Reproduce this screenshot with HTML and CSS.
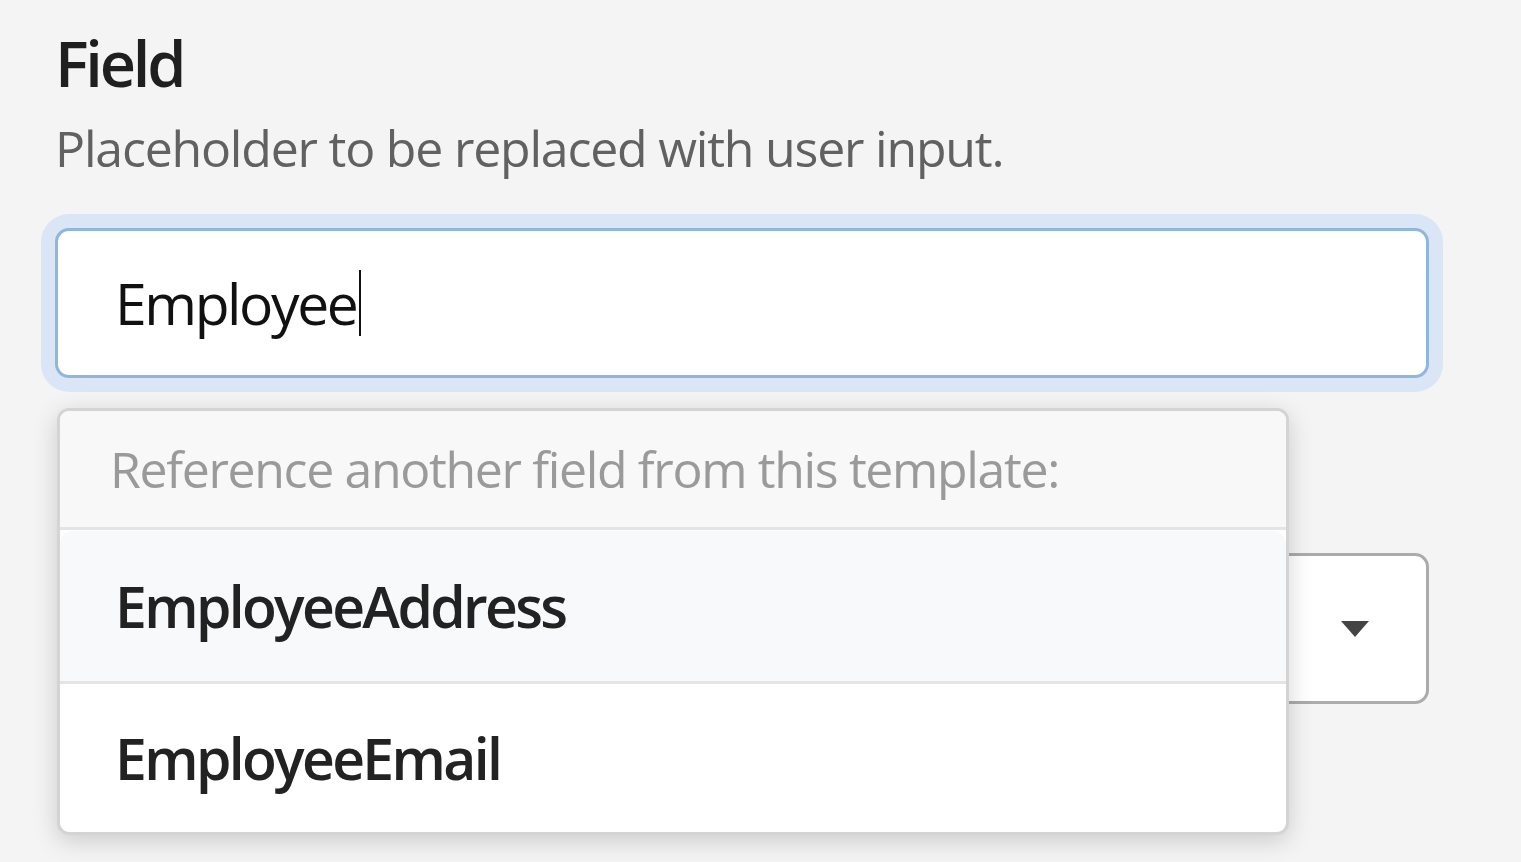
FILE: index.html
```html
<!DOCTYPE html>
<html lang="en">
  <head>
    <meta charset="UTF-8" />
    <meta name="viewport" content="width=device-width, initial-scale=1.0" />
    <title>Field</title>
    <link rel="stylesheet" href="styles.css">
  </head>
  <body>
    <div class="panel">
      <h2 class="label">Field</h2>
      <p class="hint">Placeholder to be replaced with user input.</p>
      <div class="input">
        <span class="value">Employee</span><span class="caret"></span>
      </div>
      <div class="select">
        <span class="chevron"></span>
      </div>

      <div class="menu">
        <div class="menu-head">Reference another field from this template:</div>
        <div class="menu-item active">EmployeeAddress</div>
        <div class="menu-item">EmployeeEmail</div>
      </div>
    </div>
  </body>
</html>
```

FILE: styles.css
```css
* {
  margin: 0;
  padding: 0;
  box-sizing: border-box;
}
body {
  width: 100vw;
  height: 100vh;
  overflow: hidden;
  background: #f4f4f4;
  font-family: "Open Sans", "Noto Sans", sans-serif;
}
.panel {
  position: relative;
  padding: 24px 92px 0 55px;
}
.label {
  font-size: 63px;
  line-height: 77px;
  font-weight: 600;
  letter-spacing: -3.2px;
  color: #1f1f1f;
}
.hint {
  margin-top: 12px;
  font-size: 50px;
  line-height: 70px;
  letter-spacing: -1.2px;
  color: #616161;
}
.input {
  display: flex;
  align-items: center;
  margin-top: 45px;
  height: 150px;
  padding-left: 57px;
  background: #fff;
  border: 3px solid #8fb6dc;
  border-radius: 14px;
  box-shadow: 0 0 0 14px #dae5f5;
  font-size: 57px;
  letter-spacing: -2.4px;
  color: #111;
}
.caret {
  width: 2px;
  height: 66px;
  margin-left: 3px;
  background: #111;
}
.select {
  display: flex;
  justify-content: flex-end;
  align-items: center;
  margin: 175px 0 0 30px;
  height: 151px;
  padding-right: 57px;
  background: #fff;
  border: 3px solid #ababab;
  border-radius: 14px;
}
.chevron {
  width: 0;
  height: 0;
  border-left: 14px solid transparent;
  border-right: 14px solid transparent;
  border-top: 16px solid #444;
}
.menu {
  position: absolute;
  top: 408px;
  left: 57px;
  width: 1232px;
  background: #fff;
  border: 3px solid #d4d4d4;
  border-radius: 12px;
  overflow: hidden;
  box-shadow: 0 6px 24px rgba(0, 0, 0, 0.17);
}
.menu-head {
  height: 119px;
  padding-left: 50px;
  display: flex;
  align-items: center;
  background: #f8f8f8;
  border-bottom: 3px solid #e4e4e4;
  font-size: 50px;
  letter-spacing: -1.35px;
  color: #9a9a9a;
}
.menu-item {
  height: 148px;
  padding-left: 55px;
  display: flex;
  align-items: center;
  font-size: 57px;
  font-weight: 600;
  letter-spacing: -2.65px;
  color: #222;
}
.menu-item.active {
  margin-top: 1px;
  background: #f8f9fa;
  border-bottom: 3px solid #e4e4e4;
  border-radius: 12px 12px 0 0;
  height: 153px;
}
```
